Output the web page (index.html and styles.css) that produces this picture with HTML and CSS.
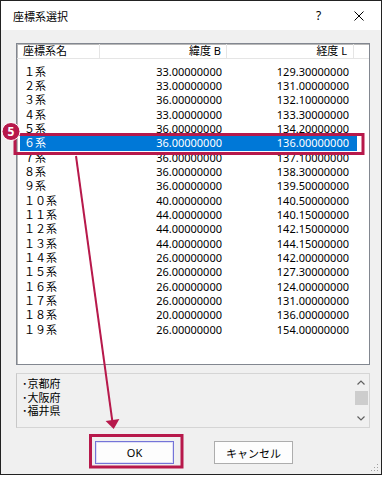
FILE: index.html
```html
<!DOCTYPE html>
<html>
<head>
  <title>座標系選択</title>
  <link rel="stylesheet" href="styles.css">
</head>
<body>
  <div class="window">
    <div class="titlebar">
      <span class="title">座標系選択</span>
      <span class="help">?</span>
      <span class="close">
        <svg width="10" height="10" viewBox="0 0 10 10"><path d="M0.5 0.5 L9.5 9.5 M9.5 0.5 L0.5 9.5" stroke="#000" stroke-width="1" fill="none"/></svg>
      </span>
    </div>

    <div class="client">
      <div class="listview">
        <div class="lv-head">
          <div class="hc name">座標系名</div>
          <div class="hc num">緯度 B</div>
          <div class="hc num">経度 L</div>
          <div class="hc rest"></div>
        </div>
        <div class="lv-body">
          <div class="row"><span class="name">１系</span><span class="num">33.00000000</span><span class="num">129.30000000</span></div>
          <div class="row"><span class="name">２系</span><span class="num">33.00000000</span><span class="num">131.00000000</span></div>
          <div class="row"><span class="name">３系</span><span class="num">36.00000000</span><span class="num">132.10000000</span></div>
          <div class="row"><span class="name">４系</span><span class="num">33.00000000</span><span class="num">133.30000000</span></div>
          <div class="row"><span class="name">５系</span><span class="num">36.00000000</span><span class="num">134.20000000</span></div>
          <div class="row selected"><span class="name">６系</span><span class="num">36.00000000</span><span class="num">136.00000000</span></div>
          <div class="row"><span class="name">７系</span><span class="num">36.00000000</span><span class="num">137.10000000</span></div>
          <div class="row"><span class="name">８系</span><span class="num">36.00000000</span><span class="num">138.30000000</span></div>
          <div class="row"><span class="name">９系</span><span class="num">36.00000000</span><span class="num">139.50000000</span></div>
          <div class="row"><span class="name">１０系</span><span class="num">40.00000000</span><span class="num">140.50000000</span></div>
          <div class="row"><span class="name">１１系</span><span class="num">44.00000000</span><span class="num">140.15000000</span></div>
          <div class="row"><span class="name">１２系</span><span class="num">44.00000000</span><span class="num">142.15000000</span></div>
          <div class="row"><span class="name">１３系</span><span class="num">44.00000000</span><span class="num">144.15000000</span></div>
          <div class="row"><span class="name">１４系</span><span class="num">26.00000000</span><span class="num">142.00000000</span></div>
          <div class="row"><span class="name">１５系</span><span class="num">26.00000000</span><span class="num">127.30000000</span></div>
          <div class="row"><span class="name">１６系</span><span class="num">26.00000000</span><span class="num">124.00000000</span></div>
          <div class="row"><span class="name">１７系</span><span class="num">26.00000000</span><span class="num">131.00000000</span></div>
          <div class="row"><span class="name">１８系</span><span class="num">20.00000000</span><span class="num">136.00000000</span></div>
          <div class="row"><span class="name">１９系</span><span class="num">26.00000000</span><span class="num">154.00000000</span></div>
        </div>
      </div>

      <div class="notes">
        <div class="notes-text">･京都府<br>･大阪府<br>･福井県</div>
        <div class="vscroll">
          <div class="sb-arrow">
            <svg width="8" height="5" viewBox="0 0 8 5"><path d="M0.5 4.5 L4 1 L7.5 4.5" stroke="#606060" stroke-width="1.2" fill="none"/></svg>
          </div>
          <div class="sb-thumb"></div>
          <div class="sb-track"></div>
          <div class="sb-arrow">
            <svg width="8" height="5" viewBox="0 0 8 5"><path d="M0.5 0.5 L4 4 L7.5 0.5" stroke="#606060" stroke-width="1.2" fill="none"/></svg>
          </div>
        </div>
      </div>

      <div class="buttons">
        <button class="btn default">OK</button>
        <button class="btn">キャンセル</button>
      </div>
    </div>

    <div class="grip">
      <svg width="8" height="8" viewBox="0 0 8 8">
        <rect x="6" y="0" width="1" height="1" fill="#a0a0a0"/>
        <rect x="3" y="3" width="1" height="1" fill="#a0a0a0"/>
        <rect x="6" y="3" width="1" height="1" fill="#a0a0a0"/>
        <rect x="0" y="6" width="1" height="1" fill="#a0a0a0"/>
        <rect x="3" y="6" width="1" height="1" fill="#a0a0a0"/>
        <rect x="6" y="6" width="1" height="1" fill="#a0a0a0"/>
      </svg>
    </div>

    <!-- 注釈 -->
    <svg class="annot" width="383" height="477" viewBox="0 0 383 477">
      <rect x="15" y="134.5" width="348" height="19" fill="none" stroke="#b7194b" stroke-width="3"/>
      <line x1="76" y1="156" x2="112.3" y2="421" stroke="#b7194b" stroke-width="2"/>
      <polygon points="105.6,421 119.4,419 113.7,429" fill="#b7194b"/>
      <rect x="90.5" y="435.5" width="91.5" height="31.5" fill="none" stroke="#b7194b" stroke-width="3"/>
      <circle cx="11" cy="131.5" r="9" fill="#b7194b" stroke="#fff" stroke-width="1"/>
      <text x="11" y="135.8" class="badge-text">5</text>
    </svg>
  </div>
</body>
</html>
```

FILE: styles.css
```css
body {
  margin: 0;
  background-color: #fff;
  font-family: "Noto Sans", "Noto Sans CJK JP", sans-serif;
  font-size: 11px;
  color: #000;
}
.window {
  position: relative;
  width: 382px;
  height: 475px;
  box-sizing: border-box;
  border: 1px solid #222;
  display: flex;
  flex-direction: column;
  background-color: #f0f0f0;
}
.titlebar {
  height: 29px;
  flex: none;
  display: flex;
  align-items: center;
  background-color: #fff;
  padding-left: 12px;
}
.title {
  font-size: 11px;
  flex: 1;
}
.help {
  width: 12px;
  margin-right: 26px;
  font-size: 12px;
}
.close {
  width: 10px;
  height: 10px;
  margin-right: 17px;
  display: flex;
}
.client {
  flex: 1;
  padding: 13px 11px 0 15px;
  display: flex;
  flex-direction: column;
}
.listview {
  height: 322px;
  box-sizing: border-box;
  border: 1px solid #828790;
  box-shadow: inset 1px 1px 0 #b8b8b8;
  background-color: #fff;
  display: flex;
  flex-direction: column;
}
.lv-head {
  height: 15px;
  flex: none;
  display: flex;
  box-sizing: border-box;
  border-bottom: 1px solid #e5e5e5;
  line-height: 14px;
}
.hc {
  box-sizing: border-box;
  border-right: 1px solid #e5e5e5;
}
.hc.name {
  width: 83px;
  padding-left: 6px;
}
.hc.num {
  width: 127px;
  text-align: right;
  padding-right: 5px;
}
.hc.num:nth-child(3) {
  padding-right: 6px;
}
.hc.rest {
  flex: 1;
  border-right: none;
}
.lv-body {
  padding: 5.8px 0 0 3px;
}
.row {
  display: flex;
  width: 337px;
  height: 14.33px;
  line-height: 14.33px;
  white-space: nowrap;
}
.row .name {
  width: 83px;
  padding-left: 4px;
  box-sizing: border-box;
}
.row .num {
  width: 127px;
  padding-right: 8px;
  box-sizing: border-box;
  text-align: right;
}
.row.selected {
  background-color: #0078d7;
  color: #fff;
}
.notes {
  margin-top: 8px;
  height: 55px;
  box-sizing: border-box;
  border: 1px solid #d5d5d5;
  border-left-color: #c8c8c8;
  display: flex;
}
.notes-text {
  flex: 1;
  padding: 3px 0 0 5px;
  line-height: 13.5px;
}
.vscroll {
  width: 16px;
  display: flex;
  flex-direction: column;
}
.sb-arrow {
  height: 17px;
  display: flex;
  align-items: center;
  justify-content: center;
}
.sb-thumb {
  height: 14px;
  margin: 0 1px 0 2px;
  background-color: #cdcdcd;
}
.sb-track {
  flex: 1;
}
.buttons {
  margin-top: 13px;
  display: flex;
  gap: 40px;
  padding-left: 79px;
}
.btn {
  width: 79px;
  height: 23px;
  margin: 0;
  padding: 0;
  box-sizing: border-box;
  border: 1px solid #adadad;
  background-color: #fdfdfd;
  font-family: "Noto Sans", "Noto Sans CJK JP", sans-serif;
  font-size: 11px;
  color: #000;
}
.btn.default {
  border-color: #7474d8;
  box-shadow: inset 0 0 0 1px #e0e0f6;
}
.grip {
  position: absolute;
  right: 2px;
  bottom: 2px;
  width: 8px;
  height: 8px;
  display: flex;
}
.annot {
  position: absolute;
  top: -1px;
  left: -1px;
  pointer-events: none;
}
.badge-text {
  font-family: "Noto Sans", sans-serif;
  font-size: 12px;
  font-weight: bold;
  fill: #fff;
  text-anchor: middle;
}
```
